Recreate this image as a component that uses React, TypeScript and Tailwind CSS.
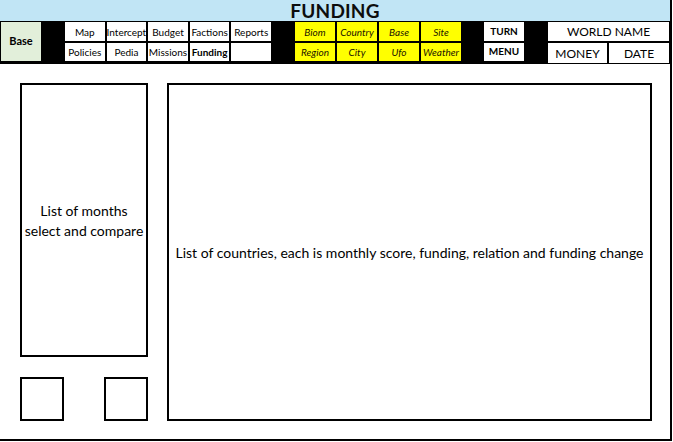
const NAV_TOP = ["Map", "Intercept", "Budget", "Factions", "Reports"];
const NAV_BOTTOM = ["Policies", "Pedia", "Missions", "Funding", ""];
const GEO_TOP = ["Biom", "Country", "Base", "Site"];
const GEO_BOTTOM = ["Region", "City", "Ufo", "Weather"];

function NavCell({ label }: { label: string }) {
  return (
    <div
      className={`flex items-center justify-center border border-black bg-white pt-[1px] text-[10px] leading-none text-black ${
        label === "Funding" ? "font-bold" : ""
      }`}
    >
      {label}
    </div>
  );
}

function GeoCell({ label }: { label: string }) {
  return (
    <div className="flex items-center justify-center border border-black bg-[#ffff00] pt-[1px] text-[10px] italic leading-none text-[#1a1400]">
      {label}
    </div>
  );
}

export default function App() {
  return (
    <div
      className="h-[442px] w-[673px] overflow-hidden bg-white text-black"
      style={{ fontFamily: "Lato, 'Open Sans', sans-serif" }}
    >
      <div className="flex h-[441px] w-[672px] flex-col border-b-2 border-r-2 border-black">
        {/* title band */}
        <div className="relative h-[21px] shrink-0 bg-[#c1e5f5]">
          <div className="absolute left-0 right-0 top-[1px] text-center text-[19px] font-bold leading-none tracking-[0.2px] text-[#0d0d0d]">
            FUNDING
          </div>
        </div>

        {/* toolbar */}
        <div className="flex h-[43px] shrink-0 border-b-2 border-black bg-black">
          <div className="flex w-[42px] items-center justify-center border border-black bg-[#e2efda] text-[11px] font-bold">
            Base
          </div>
          <div className="w-[22px]" />
          <div className="grid w-[208px] grid-cols-5 grid-rows-2">
            {NAV_TOP.map((l) => (
              <NavCell key={l} label={l} />
            ))}
            {NAV_BOTTOM.map((l, i) => (
              <NavCell key={i} label={l} />
            ))}
          </div>
          <div className="w-[22px]" />
          <div className="grid w-[168px] grid-cols-4 grid-rows-2">
            {GEO_TOP.map((l) => (
              <GeoCell key={l} label={l} />
            ))}
            {GEO_BOTTOM.map((l) => (
              <GeoCell key={l} label={l} />
            ))}
          </div>
          <div className="w-[21px]" />
          <div className="grid w-[42px] grid-rows-2 text-[10px] font-bold">
            <div className="flex items-center justify-center border border-black bg-white">TURN</div>
            <div className="flex items-center justify-center border border-black bg-white">MENU</div>
          </div>
          <div className="w-[22px]" />
          <div className="grid flex-1 grid-rows-2 text-[12px]">
            <div className="flex items-center justify-center border border-black bg-white pt-[2px]">WORLD NAME</div>
            <div className="grid grid-cols-[61px_1fr]">
              <div className="flex items-center justify-center border border-black bg-white pt-[2px]">MONEY</div>
              <div className="flex items-center justify-center border border-black bg-white pt-[2px]">DATE</div>
            </div>
          </div>
        </div>

        {/* body */}
        <div className="flex flex-1 gap-[19px] pb-[18px] pl-[20px] pr-[18px] pt-[19px] text-[14px]">
          <div className="flex w-[128px] flex-col gap-[20px]">
            <div className="flex flex-1 items-center justify-center border-2 border-black pt-[2px] text-center leading-[20px]">
              List of months
              <br />
              select and compare
            </div>
            <div className="flex h-[44px] justify-between">
              <div className="w-[44px] border-2 border-black" />
              <div className="w-[44px] border-2 border-black" />
            </div>
          </div>
          <div className="flex flex-1 items-center justify-center border-2 border-black text-center">
            List of countries, each is monthly score, funding, relation and funding change
          </div>
        </div>
      </div>
    </div>
  );
}
